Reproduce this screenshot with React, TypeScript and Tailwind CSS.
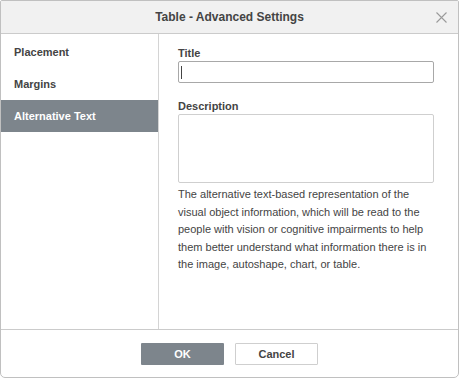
import React from "react";

const tabs = ["Placement", "Margins", "Alternative Text"];

export default function App() {
  const active = 2;

  return (
    <div className="w-[460px] h-[378px] bg-white" style={{ fontFamily: '"Liberation Sans", Arial, sans-serif' }}>
      <div className="w-[459px] h-[378px] flex flex-col border border-[#c0c0c0] rounded-t-[2px] rounded-b-[5px] overflow-hidden bg-white">
        {/* Header */}
        <div className="h-[33px] shrink-0 relative flex items-center justify-center bg-[#f1f1f1] border-b border-[#cbcbcb]">
          <span className="text-[12px] font-bold text-[#444]">Table - Advanced Settings</span>
          <svg className="absolute right-[11px] top-[11px]" width="11" height="11" viewBox="0 0 11 11">
            <path d="M0.5 0.5 L10.5 10.5 M10.5 0.5 L0.5 10.5" stroke="#9a9a9a" strokeWidth="1.1" fill="none" />
          </svg>
        </div>

        {/* Body */}
        <div className="flex flex-1 min-h-0">
          <div className="w-[158px] shrink-0 border-r border-[#d4d4d4] pt-[2px]">
            {tabs.map((t, i) => (
              <div
                key={t}
                className={
                  "h-[32px] flex items-center pl-[13px] text-[11px] font-bold " +
                  (i === active ? "bg-[#7d858c] text-white" : "text-[#444]")
                }
              >
                {t}
              </div>
            ))}
          </div>

          <div className="flex-1 pl-[19px] pt-[12px]">
            <div className="text-[11px] font-bold text-[#444] leading-[14px] mb-[1px]">Title</div>
            <div className="w-[256px] h-[22px] border border-[#a8a8a8] rounded-[2px] flex items-center pl-[2px]">
              <div className="w-px h-[13px] bg-[#444]" />
            </div>
            <div className="text-[11px] font-bold text-[#444] leading-[14px] mt-[16px] mb-[1px]">Description</div>
            <div className="w-[256px] h-[69px] border border-[#cfcfcf] rounded-[2px]" />
            <p className="w-[262px] mt-[3px] text-[11px] leading-[17.5px] text-[#444]">
              The alternative text-based representation of the visual object information, which will be read to the
              people with vision or cognitive impairments to help them better understand what information there is in
              the image, autoshape, chart, or table.
            </p>
          </div>
        </div>

        {/* Footer */}
        <div className="h-[48px] shrink-0 border-t border-[#cbcbcb] flex justify-center gap-[11px] pt-[13px]">
          <button className="w-[83px] h-[22px] bg-[#7d858c] text-white text-[11px] font-bold rounded-[1px]">OK</button>
          <button className="w-[83px] h-[22px] bg-white border border-[#cfcfcf] text-[#444] text-[11px] font-bold rounded-[1px]">
            Cancel
          </button>
        </div>
      </div>
    </div>
  );
}
